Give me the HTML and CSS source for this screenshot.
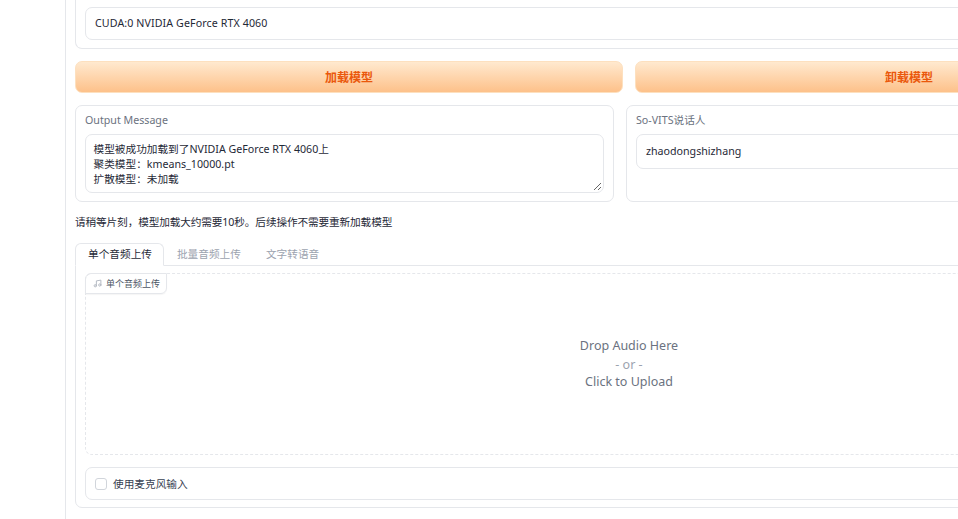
FILE: index.html
```html
<!DOCTYPE html>
<html lang="zh">
<head>
<meta charset="utf-8">
<title>So-VITS</title>
<link rel="stylesheet" href="styles.css">
</head>
<body>
<main class="app">
  <section class="panel device-panel">
    <div class="field device">CUDA:0 NVIDIA GeForce RTX 4060</div>
  </section>
  <div class="two-col buttons">
    <button class="btn" type="button">加载模型</button>
    <button class="btn" type="button">卸载模型</button>
  </div>
  <div class="info-row">
    <section class="panel info-panel">
      <div class="label">Output Message</div>
      <div class="textarea">模型被成功加载到了NVIDIA GeForce RTX 4060上<br>聚类模型：kmeans_10000.pt<br>扩散模型：未加载<svg class="grip" width="9" height="9" viewBox="0 0 9 9"><path d="M8 1 1 8M8 5 5 8" stroke="#666" stroke-width="1" fill="none"/></svg></div>
    </section>
    <section class="panel info-panel">
      <div class="label">So-VITS说话人</div>
      <div class="field speaker">zhaodongshizhang</div>
    </section>
  </div>
  <p class="note">请稍等片刻，模型加载大约需要10秒。后续操作不需要重新加载模型</p>
  <nav class="tabs">
    <span class="tab active">单个音频上传</span>
    <span class="tab">批量音频上传</span>
    <span class="tab">文字转语音</span>
  </nav>
  <section class="tab-panel">
    <div class="drop">
      <div class="badge">
        <svg width="9" height="9" viewBox="0 0 24 24" fill="none" stroke="#b4b9c2" stroke-width="2.6" stroke-linecap="round" stroke-linejoin="round"><path d="M9 18V5l12-2v13"/><circle cx="6" cy="18" r="3"/><circle cx="18" cy="16" r="3"/></svg>
        <span>单个音频上传</span>
      </div>
      <div class="drop-text">
        <div>Drop Audio Here</div>
        <div class="or">- or -</div>
        <div>Click to Upload</div>
      </div>
    </div>
    <label class="mic"><span class="check"></span><span>使用麦克风输入</span></label>
  </section>
</main>
</body>
</html>
```
FILE: styles.css
```css
* { box-sizing: border-box; }
html, body { margin: 0; height: 519px; overflow: hidden; background: #fff; }
body {
  font-family: "Noto Sans", "Noto Sans CJK SC", sans-serif;
  font-size: 10.67px;
  color: #1f2937;
}
.app {
  width: 1118px;
  height: 519px;
  margin-left: 65px;
  padding-left: 9px;
  border-left: 1px solid #e5e7eb;
}
.panel {
  background: #fff;
  border: 1px solid #e5e7eb;
  border-radius: 7px;
  padding: 10px 9px;
}
.device-panel {
  height: 49px;
  padding-top: 7px;
  border-top: none;
  border-top-left-radius: 0;
  border-top-right-radius: 0;
}
.field {
  height: 33px;
  display: flex;
  align-items: center;
  padding: 0 9px 2px;
  border: 1px solid #e5e7eb;
  border-radius: 7px;
  background: #fff;
  color: #1f2937;
}
.device { letter-spacing: .1px; }
.two-col { display: grid; grid-template-columns: 548px 548px; gap: 12px; }
.buttons { margin-top: 12px; }
.btn {
  height: 32px;
  padding: 0 0 1px;
  border: 1px solid #fde0bf;
  border-radius: 7px;
  background: linear-gradient(to bottom, #ffe9cf, #fdc18a);
  color: #ea580c;
  font: 600 12px "Noto Sans", "Noto Sans CJK SC", sans-serif;
  text-align: center;
}
.info-row {
  display: grid;
  grid-template-columns: 539px 557px;
  gap: 12px;
  margin-top: 12px;
}
.info-panel { height: 97px; padding: 6px 9px 0; }
.label { height: 22px; line-height: 17px; color: #6b7280; }
.textarea {
  position: relative;
  height: 59px;
  padding: 7px 7.5px;
  border: 1px solid #e5e7eb;
  border-radius: 7px;
  line-height: 15px;
}
.grip { position: absolute; right: 1px; bottom: 1px; }
.speaker { height: 35px; }
.note { margin: 12px 0 0; height: 17px; line-height: 17px; color: #1f2937; letter-spacing: -.13px; }
.tabs {
  display: flex;
  margin-top: 12px;
  height: 23px;
  position: relative;
  z-index: 1;
}
.tab {
  height: 23px;
  line-height: 21px;
  padding: 0 11px 0 12px;
  color: #9ca3af;
  border: 1px solid transparent;
}
.tab.active {
  color: #1f2937;
  background: #fff;
  border-color: #e5e7eb;
  border-bottom-color: #fff;
  border-radius: 6px 6px 0 0;
}
.tab-panel {
  height: 243px;
  margin-top: -1px;
  padding: 7px 9px 0;
  border: 1px solid #e5e7eb;
  border-radius: 0 0 7px 7px;
}
.drop {
  position: relative;
  height: 182px;
  border: 1px dashed #e5e7eb;
  border-radius: 7px;
  display: flex;
  align-items: center;
  justify-content: center;
}
.badge {
  position: absolute;
  left: -1px;
  top: -1px;
  height: 21px;
  width: 82px;
  display: flex;
  align-items: center;
  gap: 4px;
  padding-left: 7px;
  border: 1px solid #e5e7eb;
  border-radius: 6px 0 6px 0;
  font-size: 9px;
  color: #4b5563;
  box-shadow: 0 1px 1px rgba(0,0,0,.04);
}
.drop-text {
  text-align: center;
  color: #6b7280;
  font-size: 12.5px;
  line-height: 18px;
}
.or { height: 18px; padding-top: 1px; color: #9ca3af; }
.mic {
  display: flex;
  align-items: center;
  gap: 6px;
  height: 33px;
  margin-top: 12px;
  padding-left: 9px;
  padding-bottom: 1px;
  border: 1px solid #e5e7eb;
  border-radius: 7px;
  color: #374151;
}
.check {
  width: 12px;
  height: 12px;
  margin-top: 2px;
  border: 1px solid #d1d5db;
  border-radius: 3px;
  background: #fff;
}
```
